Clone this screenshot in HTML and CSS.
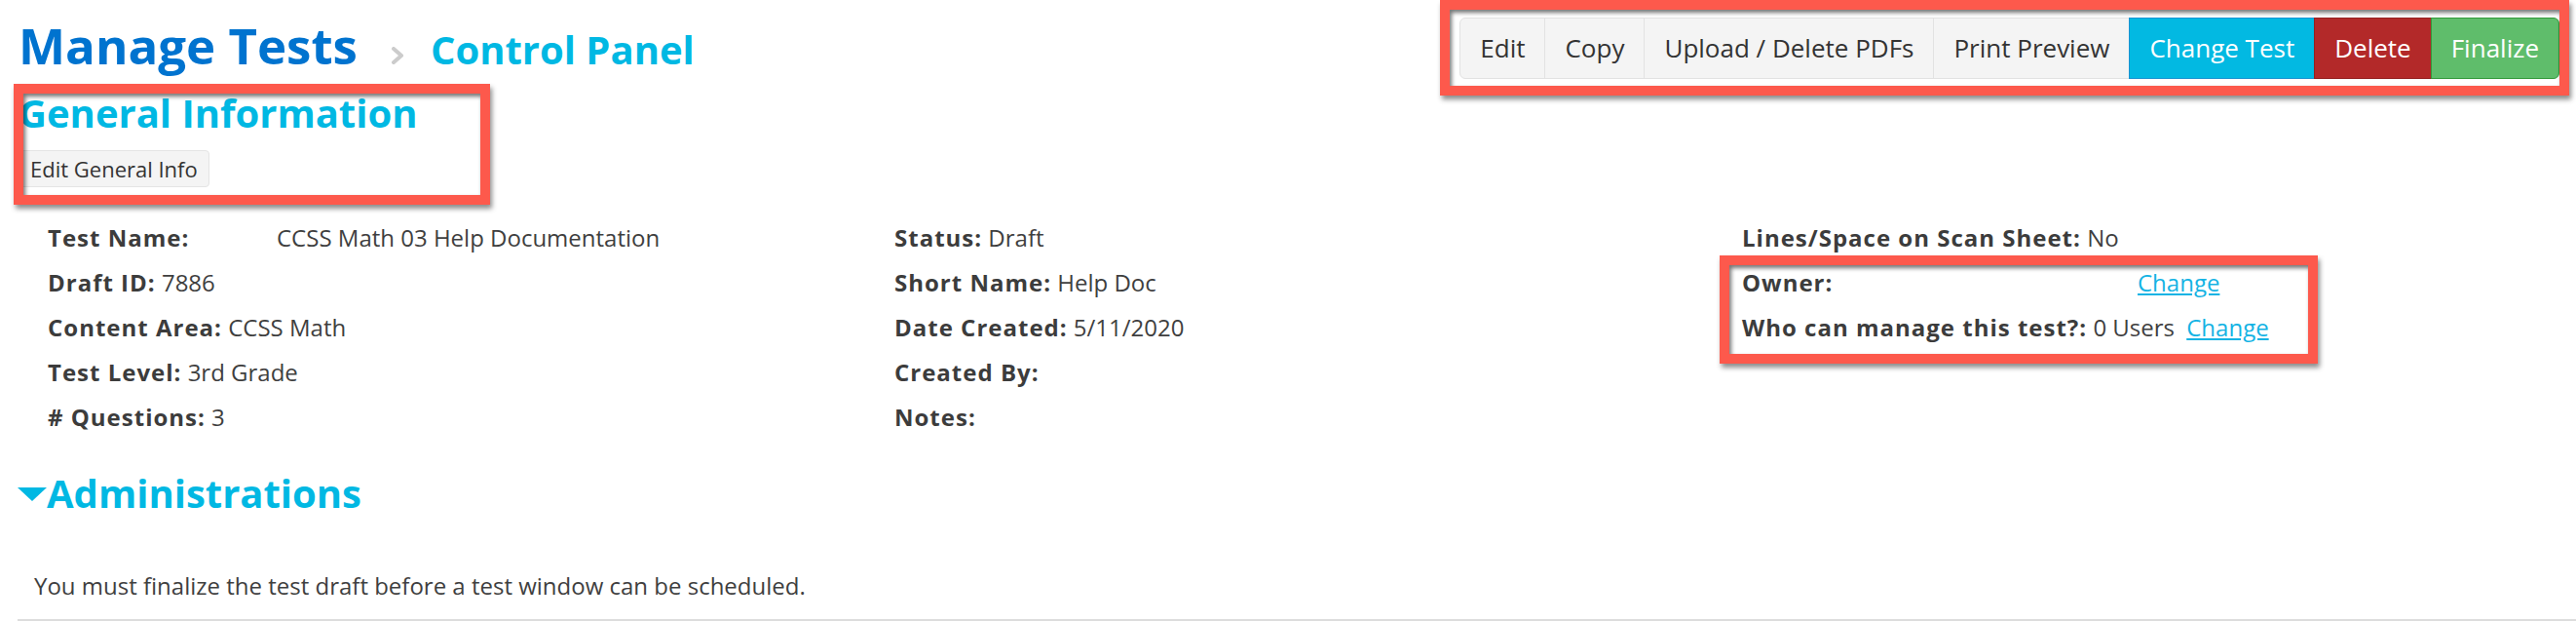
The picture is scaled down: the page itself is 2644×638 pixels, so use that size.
FILE: index.html
```html
<!DOCTYPE html>
<html lang="en">
<head>
    <meta charset="UTF-8">
    <title>Manage Tests - Control Panel</title>
    <link rel="stylesheet" href="styles.css">
</head>
<body>
    <div class="page">
        <div class="header">
            <h1 class="title">
                <span class="title-main">Manage Tests</span>
                <svg class="crumb-sep" width="14" height="18" viewBox="0 0 14 18">
                    <polyline points="3,2 11,9 3,16" fill="none" stroke="#cccccc" stroke-width="4" stroke-linejoin="round" stroke-linecap="round"/>
                </svg>
                <span class="title-sub">Control Panel</span>
            </h1>
            <div class="btn-group">
                <button class="btn">Edit</button>
                <button class="btn">Copy</button>
                <button class="btn">Upload / Delete PDFs</button>
                <button class="btn">Print Preview</button>
                <button class="btn btn-info">Change Test</button>
                <button class="btn btn-danger">Delete</button>
                <button class="btn btn-success">Finalize</button>
            </div>
        </div>

        <h2 class="section-title">General Information</h2>
        <button class="btn-small">Edit General Info</button>

        <div class="info-grid">
            <div class="info-col">
                <div class="info-row"><b class="label-wide">Test Name:</b>CCSS Math 03 Help Documentation</div>
                <div class="info-row"><b>Draft ID:</b> 7886</div>
                <div class="info-row"><b>Content Area:</b> CCSS Math</div>
                <div class="info-row"><b>Test Level:</b> 3rd Grade</div>
                <div class="info-row"><b># Questions:</b> 3</div>
            </div>
            <div class="info-col">
                <div class="info-row"><b>Status:</b> Draft</div>
                <div class="info-row"><b>Short Name:</b> Help Doc</div>
                <div class="info-row"><b>Date Created:</b> 5/11/2020</div>
                <div class="info-row"><b>Created By:</b></div>
                <div class="info-row"><b>Notes:</b></div>
            </div>
            <div class="info-col">
                <div class="info-row"><b>Lines/Space on Scan Sheet:</b> No</div>
                <div class="info-row"><b class="label-owner">Owner:</b><a href="#">Change</a></div>
                <div class="info-row"><b>Who can manage this test?:</b> 0 Users <a class="link-gap" href="#">Change</a></div>
            </div>
        </div>

        <h2 class="section-title admin-title"><span class="caret"></span>Administrations</h2>
        <p class="note">You must finalize the test draft before a test window can be scheduled.</p>
        <div class="rule"></div>

        <!-- annotation boxes -->
        <div class="callout callout-general"></div>
        <div class="callout callout-actions"></div>
        <div class="callout callout-owner"></div>
    </div>
</body>
</html>
```

FILE: styles.css
```css
body {
    margin: 0;
    padding: 0;
    background-color: #fff;
    font-family: "Open Sans", "Liberation Sans", sans-serif;
    color: #3f3f3f;
    overflow: hidden;
}
.page {
    position: relative;
    padding: 0 17px 0 19px;
}
.header {
    display: flex;
    justify-content: space-between;
    align-items: flex-start;
}
.title {
    margin: 15px 0 0;
    display: flex;
    align-items: baseline;
    line-height: 62px;
    font-weight: 700;
}
.title-main {
    font-size: 51px;
    color: #0073cf;
}
.crumb-sep {
    margin: 0 27px 0 34px;
}
.title-sub {
    font-size: 40px;
    color: #00b8e3;
}
.btn-group {
    display: flex;
    margin-top: 18px;
}
.btn {
    font-family: inherit;
    font-size: 26px;
    line-height: 37px;
    padding: 12px 20px;
    border: 1px solid #e2e2e2;
    background-color: #f4f4f4;
    color: #333;
    margin-left: -1px;
}
.btn:first-child {
    margin-left: 0;
    border-radius: 6px 0 0 6px;
}
.btn:last-child {
    border-radius: 0 6px 6px 0;
}
.btn-info {
    background-color: #02b9e2;
    border-color: #1a93d2;
    color: #fff;
}
.btn-danger {
    background-color: #b32929;
    border-color: #942020;
    color: #fff;
}
.btn-success {
    background-color: #5fbd6b;
    border-color: #339a3a;
    color: #fff;
}
.section-title {
    margin: 11px 0 0;
    font-size: 40px;
    line-height: 46px;
    font-weight: 700;
    color: #00b8e3;
}
.btn-small {
    display: block;
    margin-top: 15px;
    font-family: inherit;
    font-size: 22px;
    line-height: 24px;
    padding: 6px 11px;
    border: 1px solid #e4e4e4;
    border-radius: 4px;
    background-color: #f4f4f4;
    color: #333;
}
.info-grid {
    display: grid;
    grid-template-columns: 869px 870px 1fr;
    margin: 29px 0 0 30px;
    font-size: 24px;
    line-height: 46px;
}
.info-row {
    white-space: nowrap;
}
.info-row b {
    font-weight: 700;
    letter-spacing: 1px;
    color: #3c3c3c;
}
.label-wide {
    display: inline-block;
    width: 235px;
}
.label-owner {
    display: inline-block;
    width: 406px;
}
.info-row a {
    color: #14b3e4;
}
.link-gap {
    margin-left: 6px;
}
.admin-title {
    margin-top: 30px;
    line-height: 50px;
    margin-left: -1px;
}
.caret {
    display: inline-block;
    width: 0;
    height: 0;
    border-left: 15px solid transparent;
    border-right: 15px solid transparent;
    border-top: 14px solid #00b8e3;
    vertical-align: 7px;
}
.note {
    margin: 53px 0 0 16px;
    font-size: 24px;
    line-height: 34px;
    color: #3f3f3f;
}
.rule {
    margin: 17px -17px 0 -1px;
    height: 2px;
    background-color: #dddddd;
}
.callout {
    position: absolute;
    box-sizing: border-box;
    border: 10px solid #fd594c;
    box-shadow: 2px 4px 5px rgba(0, 0, 0, 0.45), inset 2px 3px 4px rgba(0, 0, 0, 0.55);
}
.callout-general {
    left: 14px;
    top: 86px;
    width: 489px;
    height: 124px;
}
.callout-actions {
    left: 1478px;
    top: 0;
    width: 1159px;
    height: 98px;
}
.callout-owner {
    left: 1765px;
    top: 262px;
    width: 614px;
    height: 111px;
}
```
